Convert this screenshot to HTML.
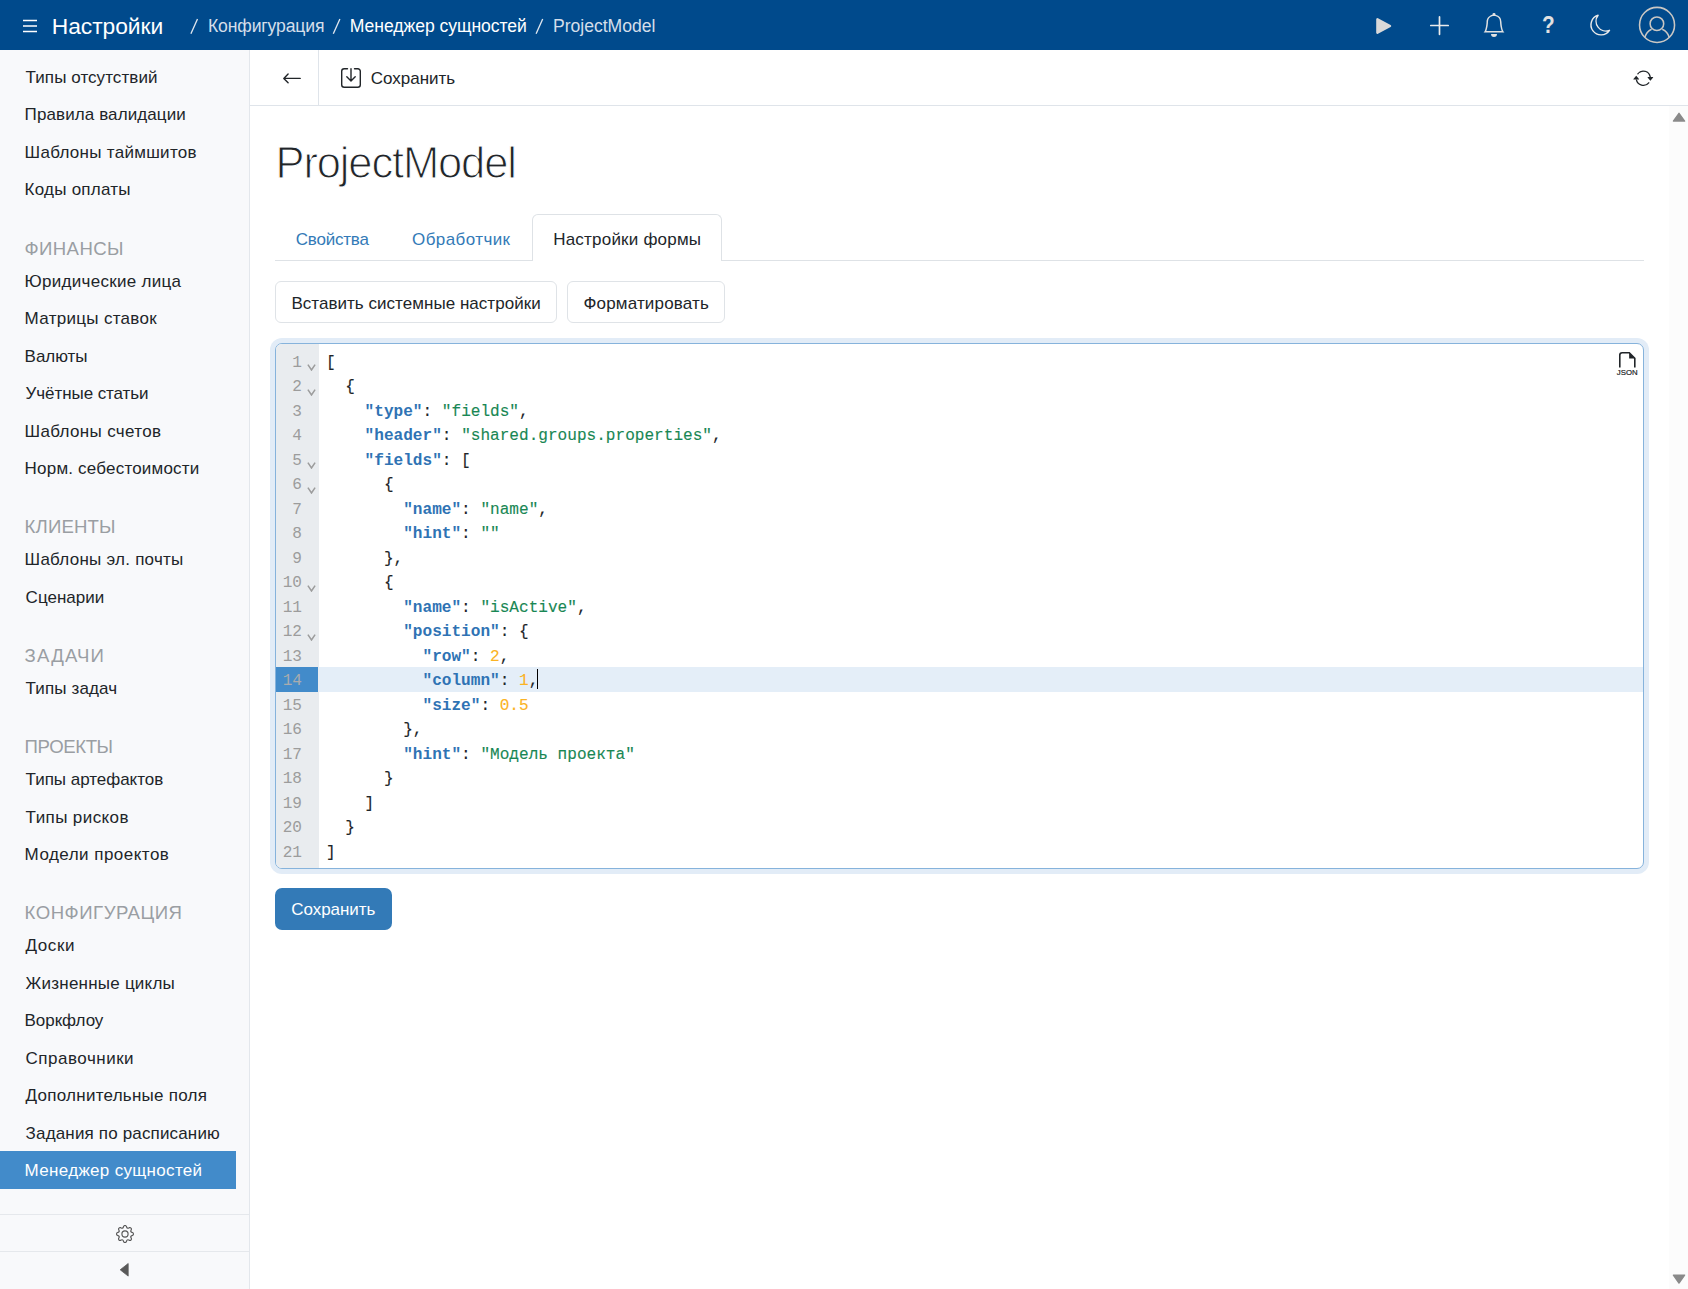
<!DOCTYPE html>
<html lang="ru">
<head>
<meta charset="utf-8">
<title>ProjectModel</title>
<style>
*{box-sizing:border-box;margin:0;padding:0}
html,body{width:1688px;height:1289px;overflow:hidden;background:#fff}
body{font-family:"Liberation Sans",sans-serif;color:#212529;position:relative;font-size:17px}
.abs{position:absolute}
span.t{position:absolute;white-space:nowrap;display:block}

/* ---------- top bar ---------- */
#top{position:absolute;left:0;top:0;width:1688px;height:50px;background:#004a8c;color:#fff}
#top .brand{left:53px;top:11px;font-size:22.8px;line-height:30px;color:#fff}
#top .crumb{top:14px;font-size:17.6px;line-height:24px;color:#fff}
#top .crumb.dim{color:#d4deea}
#top svg{position:absolute}

/* ---------- sidebar ---------- */
#side{position:absolute;left:0;top:50px;width:250px;height:1239px;background:#f8f9fb;border-right:1px solid #e3e7ec}
#side .it{position:absolute;left:25px;font-size:17px;line-height:24px;color:#212529;white-space:nowrap}
#side .gh{position:absolute;left:25px;font-size:18.6px;line-height:24px;color:#9a9ea3;white-space:nowrap}
#side .act{position:absolute;left:0;top:1101px;width:236px;height:38px;background:#428bca}
#side .sep{position:absolute;left:0;width:249px;height:1px;background:#e5e8ec}

/* ---------- toolbar ---------- */
#tool{position:absolute;left:250px;top:50px;width:1438px;height:56px;background:#fff;border-bottom:1px solid #dfe4ea}
#tool .vsep{position:absolute;left:68px;top:0;width:1px;height:55px;background:#dfe4ea}

/* ---------- scrollbar ---------- */
#sb{position:absolute;left:1669px;top:106px;width:19px;height:1183px;background:#fcfcfc}

/* ---------- main ---------- */
#tool .tx{left:121px;top:17px;font-size:17px;line-height:24px;color:#212529}
h1.title{position:absolute;left:275px;top:135px;font-size:43.5px;line-height:56px;font-weight:400;color:#212529;white-space:nowrap;-webkit-text-stroke:1.1px #fff}
#tabs{position:absolute;left:275px;top:260px;width:1369px;height:1px;background:#dee2e6}
#tabact{position:absolute;left:532px;top:214px;width:190px;height:47px;border:1px solid #dee2e6;border-bottom:0;border-radius:6px 6px 0 0;background:#fff}
.tab{top:228px;font-size:17px;line-height:24px;color:#337ab7}
.tab.on{color:#212529}
.btn{position:absolute;top:281px;height:42px;border:1px solid #dfe3e7;border-radius:6px;background:#fff}
.btx{top:292px;font-size:17px;line-height:24px;color:#212529}
#save{position:absolute;left:275px;top:888px;width:117px;height:42px;border-radius:7px;background:#337ab7}
#savetx{left:291px;top:898px;font-size:17px;line-height:24px;color:#fff}

/* ---------- editor ---------- */
#ed{position:absolute;left:275px;top:343px;width:1369px;height:526px;border:1px solid #86b3dc;border-radius:7px;box-shadow:0 0 0 5px #e2ecf7;background:#fff;overflow:hidden}
#gut{position:absolute;left:0;top:0;width:43px;height:524px;background:#e9ecef}
#hl{position:absolute;left:43px;top:323px;width:1325px;height:24.5px;background:#e4eef8}
#hlg{position:absolute;left:0;top:323px;width:42px;height:24.5px;background:#428bca}
#nums{position:absolute;left:0;top:6.5px;width:26px;text-align:right;font-family:"Liberation Mono",monospace;font-size:16.08px;line-height:24.5px;color:#9c9c9c;white-space:pre}
#nums .cur{color:#a9abae}
#code{position:absolute;left:50px;top:6.5px;-webkit-text-stroke:0.12px;font-family:"Liberation Mono",monospace;font-size:16.08px;line-height:24.5px;color:#212529;white-space:pre}
#code b{color:#2f73b4;font-weight:700;-webkit-text-stroke:0}
#code i{color:#198754;font-style:normal}
#code u{color:#fbb324;text-decoration:none}
#cursor{position:absolute;left:261px;top:325px;width:1px;height:20px;background:#000}
.fold{position:absolute;left:31.4px;width:9px;height:7px}
</style>
</head>
<body>

<div id="top">
  <svg style="left:22px;top:17.7px" width="16" height="16" viewBox="0 0 16 16"><path d="M1 2.5h14M1 8h14M1 13.5h14" stroke="#fff" stroke-width="1.7" fill="none"/></svg>

  <svg style="left:1370px;top:10px" width="30" height="32" viewBox="0 0 30 32"><path d="M6.2 9.2v13.6a1.2 1.2 0 0 0 1.8 1.05l12.6-6.8a1.2 1.2 0 0 0 0-2.1L8 8.15a1.2 1.2 0 0 0-1.8 1.05z" fill="#d9d9d9"/></svg>
  <svg style="left:1426px;top:12px" width="28" height="28" viewBox="0 0 28 28"><path d="M13.5 4.9v17.4M4.8 13.5h17.4" stroke="#ebebeb" stroke-width="1.7" stroke-linecap="round" fill="none"/></svg>
  <svg style="left:1481.8px;top:13.1px" width="24" height="24" viewBox="0 0 16 16"><path fill="#e1e1e1" d="M8 16a2 2 0 0 0 2-2H6a2 2 0 0 0 2 2zM8 1.918l-.797.161A4.002 4.002 0 0 0 4 6c0 .628-.134 2.197-.459 3.742-.16.767-.376 1.566-.663 2.258h10.244c-.287-.692-.502-1.49-.663-2.258C12.134 8.197 12 6.628 12 6a4.002 4.002 0 0 0-3.203-3.92L8 1.917zM14.22 12c.223.447.481.801.78 1H1c.299-.199.557-.553.78-1C2.68 10.2 3 6.88 3 6c0-2.42 1.72-4.44 4.005-4.901a1 1 0 1 1 1.99 0A5.002 5.002 0 0 1 13 6c0 .88.32 4.2 1.22 6z"/></svg>
  <span class="t" style="left:1541.6px;top:11px;font-size:23px;line-height:28px;font-weight:700;color:#e1e1e1;transform:scaleX(.9);transform-origin:0 0">?</span>
  <svg style="left:1586px;top:10px" width="28" height="30" viewBox="0 0 28 30"><path d="M12.1 5.2A10.07 10.07 0 1 0 23.5 20.3A9.82 9.82 0 0 1 12.1 5.2z" stroke="#ebebeb" stroke-width="1.4" stroke-linejoin="round" fill="none"/></svg>
  <svg style="left:1637px;top:5px" width="40" height="40" viewBox="0 0 40 40"><circle cx="20.05" cy="19.9" r="17.5" stroke="#c9c7c4" stroke-width="1.55" fill="none"/><circle cx="19.9" cy="18.7" r="6.8" stroke="#c9c7c4" stroke-width="1.55" fill="none"/><path d="M7.85 32.4A12.6 12.6 0 0 1 14.6 24.3M25.3 24.3A12.6 12.6 0 0 1 32.2 32.4" stroke="#c9c7c4" stroke-width="1.55" fill="none"/></svg>

  <svg style="left:0;top:0" width="700" height="50" viewBox="0 0 700 50"><path d="M190.9 33.7L197.5 18.9M333.3 33.7L339.9 18.9M536.1 33.7L542.7 18.9" stroke="#dde5ee" stroke-width="1.35" fill="none"/></svg>
  <span class="t brand" style="left:51.80px;letter-spacing:-0.056px">Настройки</span>
  <span class="t crumb dim" style="left:208.00px;letter-spacing:-0.148px">Конфигурация</span>
  <span class="t crumb" style="left:349.80px;letter-spacing:-0.059px">Менеджер сущностей</span>
  <span class="t crumb dim" style="left:553.00px;letter-spacing:-0.034px">ProjectModel</span>
</div>

<div id="side">
  <span class="it" style="top:16px;left:25.60px;letter-spacing:0.071px">Типы отсутствий</span>
  <span class="it" style="top:53px;left:24.60px;letter-spacing:0.100px">Правила валидации</span>
  <span class="it" style="top:91px;left:24.60px;letter-spacing:0.288px">Шаблоны таймшитов</span>
  <span class="it" style="top:128px;left:24.60px;letter-spacing:0.240px">Коды оплаты</span>

  <span class="gh" style="top:187px;left:24.60px;letter-spacing:0.365px">ФИНАНСЫ</span>
  <span class="it" style="top:220px;left:24.60px;letter-spacing:0.293px">Юридические лица</span>
  <span class="it" style="top:257px;left:24.60px;letter-spacing:0.307px">Матрицы ставок</span>
  <span class="it" style="top:295px;left:24.60px;letter-spacing:-0.040px">Валюты</span>
  <span class="it" style="top:332px;left:25.60px;letter-spacing:-0.076px">Учётные статьи</span>
  <span class="it" style="top:370px;left:24.60px;letter-spacing:0.339px">Шаблоны счетов</span>
  <span class="it" style="top:407px;left:24.60px;letter-spacing:0.201px">Норм. себестоимости</span>

  <span class="gh" style="top:465px;left:24.60px;letter-spacing:0.134px">КЛИЕНТЫ</span>
  <span class="it" style="top:498px;left:24.60px;letter-spacing:0.247px">Шаблоны эл. почты</span>
  <span class="it" style="top:536px;left:25.60px;letter-spacing:0.025px">Сценарии</span>

  <span class="gh" style="top:594px;left:24.60px;letter-spacing:1.160px">ЗАДАЧИ</span>
  <span class="it" style="top:627px;left:25.60px;letter-spacing:0.132px">Типы задач</span>

  <span class="gh" style="top:685px;left:24.60px;letter-spacing:-0.401px">ПРОЕКТЫ</span>
  <span class="it" style="top:718px;left:25.60px;letter-spacing:-0.028px">Типы артефактов</span>
  <span class="it" style="top:756px;left:25.60px;letter-spacing:0.400px">Типы рисков</span>
  <span class="it" style="top:793px;left:24.60px;letter-spacing:0.471px">Модели проектов</span>

  <span class="gh" style="top:851px;left:24.60px;letter-spacing:0.494px">КОНФИГУРАЦИЯ</span>
  <span class="it" style="top:884px;left:25.60px;letter-spacing:0.550px">Доски</span>
  <span class="it" style="top:922px;left:25.60px;letter-spacing:0.229px">Жизненные циклы</span>
  <span class="it" style="top:959px;left:24.60px;letter-spacing:-0.060px">Воркфлоу</span>
  <span class="it" style="top:997px;left:25.60px;letter-spacing:0.500px">Справочники</span>
  <span class="it" style="top:1034px;left:25.60px;letter-spacing:0.257px">Дополнительные поля</span>
  <span class="it" style="top:1072px;left:25.60px;letter-spacing:0.160px">Задания по расписанию</span>
  <div class="act"></div>
  <span class="it" style="top:1109px;color:#fff;left:24.60px;letter-spacing:0.320px">Менеджер сущностей</span>


  <svg class="abs" style="left:115.6px;top:1174.8px" width="18" height="18" viewBox="0 0 16 16"><path fill="#555" d="M8 4.754a3.246 3.246 0 1 0 0 6.492 3.246 3.246 0 0 0 0-6.492zM5.754 8a2.246 2.246 0 1 1 4.492 0 2.246 2.246 0 0 1-4.492 0z"/><path fill="#555" d="M9.796 1.343c-.527-1.79-3.065-1.79-3.592 0l-.094.319a.873.873 0 0 1-1.255.52l-.292-.16c-1.64-.892-3.433.902-2.54 2.541l.159.292a.873.873 0 0 1-.52 1.255l-.319.094c-1.79.527-1.79 3.065 0 3.592l.319.094a.873.873 0 0 1 .52 1.255l-.16.292c-.892 1.64.901 3.434 2.541 2.54l.292-.159a.873.873 0 0 1 1.255.52l.094.319c.527 1.79 3.065 1.79 3.592 0l.094-.319a.873.873 0 0 1 1.255-.52l.292.16c1.64.893 3.434-.902 2.54-2.541l-.159-.292a.873.873 0 0 1 .52-1.255l.319-.094c1.79-.527 1.79-3.065 0-3.592l-.319-.094a.873.873 0 0 1-.52-1.255l.16-.292c.893-1.64-.902-3.433-2.541-2.54l-.292.159a.873.873 0 0 1-1.255-.52l-.094-.319zm-2.633.283c.246-.835 1.428-.835 1.674 0l.094.319a1.873 1.873 0 0 0 2.693 1.115l.291-.16c.764-.415 1.6.42 1.184 1.185l-.159.292a1.873 1.873 0 0 0 1.116 2.692l.318.094c.835.246.835 1.428 0 1.674l-.319.094a1.873 1.873 0 0 0-1.115 2.693l.16.291c.415.764-.42 1.6-1.185 1.184l-.291-.159a1.873 1.873 0 0 0-2.693 1.116l-.094.318c-.246.835-1.428.835-1.674 0l-.094-.319a1.873 1.873 0 0 0-2.692-1.115l-.292.16c-.764.415-1.6-.42-1.184-1.185l.159-.291A1.873 1.873 0 0 0 1.945 8.93l-.319-.094c-.835-.246-.835-1.428 0-1.674l.319-.094A1.873 1.873 0 0 0 3.06 4.377l-.16-.292c-.415-.764.42-1.6 1.185-1.184l.292.159a1.873 1.873 0 0 0 2.692-1.115l.094-.319z"/></svg>
  <svg class="abs" style="left:118px;top:1211px" width="14" height="18" viewBox="0 0 14 18"><path d="M10.2 2.5v12.6L2.2 8.8z" fill="#595959" stroke="#595959" stroke-width="0.8" stroke-linejoin="round"/></svg>
  <div class="sep" style="top:1164px"></div>
  <div class="sep" style="top:1201px"></div>
</div>

<div id="tool">
  <div class="vsep"></div>
  <svg class="abs" style="left:32px;top:19px" width="20" height="18" viewBox="0 0 20 18"><path d="M1.8 9.4h16.4M1.8 9.4l4.3-4.3M1.8 9.4l4.3 4.3" stroke="#212529" stroke-width="1.4" fill="none" stroke-linecap="round" stroke-linejoin="round"/></svg>
  <svg class="abs" style="left:90px;top:17px" width="22" height="22" viewBox="0 0 22 22"><path d="M7.5 1.7H4.2a2.5 2.5 0 0 0-2.5 2.5v13.6a2.5 2.5 0 0 0 2.5 2.5h13.6a2.5 2.5 0 0 0 2.5-2.5V4.2a2.5 2.5 0 0 0-2.5-2.5h-3.3" stroke="#212529" stroke-width="1.4" fill="none" stroke-linecap="round"/><path d="M11 1.7v12M11 13.9l-4.2-4.2M11 13.9l4.2-4.2" stroke="#212529" stroke-width="1.4" fill="none" stroke-linecap="round"/></svg>
  <span class="t tx" style="left:120.80px;letter-spacing:-0.019px">Сохранить</span>
  <svg class="abs" style="left:1383px;top:17.5px" width="20.6" height="20.6" viewBox="0 0 16 16"><path fill="#212529" d="M11.534 7h3.932a.25.25 0 0 1 .192.41l-1.966 2.36a.25.25 0 0 1-.384 0l-1.966-2.36a.25.25 0 0 1 .192-.41zm-11 2h3.932a.25.25 0 0 0 .192-.41L2.692 6.23a.25.25 0 0 0-.384 0L.342 8.59A.25.25 0 0 0 .534 9z"/><path fill="#212529" fill-rule="evenodd" d="M8 3c-1.552 0-2.94.707-3.857 1.818a.5.5 0 1 1-.771-.636A6.002 6.002 0 0 1 13.917 7H12.9A5.002 5.002 0 0 0 8 3zM3.1 9a5.002 5.002 0 0 0 8.757 2.182.5.5 0 1 1 .771.636A6.002 6.002 0 0 1 2.083 9H3.1z"/></svg>
</div>

<div id="main">
  <h1 class="title" style="left:275.60px;letter-spacing:-1.147px">ProjectModel</h1>
  <div id="tabs"></div>
  <div id="tabact"></div>
  <span class="t tab" style="left:295.80px;letter-spacing:-0.224px">Свойства</span>
  <span class="t tab" style="left:412.00px;letter-spacing:0.419px">Обработчик</span>
  <span class="t tab on" style="left:553.20px;letter-spacing:0.212px">Настройки формы</span>
  <div class="btn" style="left:275px;width:282px"></div>
  <div class="btn" style="left:567px;width:158px"></div>
  <span class="t btx" style="left:291.40px;letter-spacing:0.038px">Вставить системные настройки</span>
  <span class="t btx" style="left:583.40px;letter-spacing:0.182px">Форматировать</span>
  <div id="ed">
    <div id="gut"></div>
    <div id="hl"></div>
    <div id="hlg"></div>
    <div id="nums">1
2
3
4
5
6
7
8
9
10
11
12
13
<span class="cur">14</span>
15
16
17
18
19
20
21</div>
    <svg class="fold" style="top:20.2px" viewBox="0 0 9 7"><path d="M0.9 0.6L4.5 6L8.1 0.6" stroke="#9c9c9c" stroke-width="1.5" fill="none"/></svg><svg class="fold" style="top:44.7px" viewBox="0 0 9 7"><path d="M0.9 0.6L4.5 6L8.1 0.6" stroke="#9c9c9c" stroke-width="1.5" fill="none"/></svg><svg class="fold" style="top:118.2px" viewBox="0 0 9 7"><path d="M0.9 0.6L4.5 6L8.1 0.6" stroke="#9c9c9c" stroke-width="1.5" fill="none"/></svg><svg class="fold" style="top:142.7px" viewBox="0 0 9 7"><path d="M0.9 0.6L4.5 6L8.1 0.6" stroke="#9c9c9c" stroke-width="1.5" fill="none"/></svg><svg class="fold" style="top:240.7px" viewBox="0 0 9 7"><path d="M0.9 0.6L4.5 6L8.1 0.6" stroke="#9c9c9c" stroke-width="1.5" fill="none"/></svg><svg class="fold" style="top:289.7px" viewBox="0 0 9 7"><path d="M0.9 0.6L4.5 6L8.1 0.6" stroke="#9c9c9c" stroke-width="1.5" fill="none"/></svg>
    <div id="code">[
  {
    <b>"type"</b>: <i>"fields"</i>,
    <b>"header"</b>: <i>"shared.groups.properties"</i>,
    <b>"fields"</b>: [
      {
        <b>"name"</b>: <i>"name"</i>,
        <b>"hint"</b>: <i>""</i>
      },
      {
        <b>"name"</b>: <i>"isActive"</i>,
        <b>"position"</b>: {
          <b>"row"</b>: <u>2</u>,
          <b>"column"</b>: <u>1</u>,
          <b>"size"</b>: <u>0.5</u>
        },
        <b>"hint"</b>: <i>"Модель проекта"</i>
      }
    ]
  }
]</div>
    <div id="cursor"></div>
    <svg class="abs" style="left:1340px;top:7px" width="24" height="28" viewBox="0 0 24 28"><path d="M3.8 16.6V4.1a2.3 2.3 0 0 1 2.3-2.3h7.2l5.5 5.5v9.3" stroke="#212529" stroke-width="1.6" fill="none"/><path d="M13.1 1.6l5.9 5.9h-5.9z" fill="#212529"/><text x="11.2" y="24" font-family="Liberation Sans" font-size="7.8" text-anchor="middle" fill="#212529" stroke="#212529" stroke-width="0.2">JSON</text></svg>
  </div>
  <div id="save"></div>
  <span class="t" id="savetx" style="left:291.20px;letter-spacing:-0.031px">Сохранить</span>
</div>

<div id="sb">
  <svg class="abs" style="left:1.5px;top:6px" width="16" height="12" viewBox="0 0 16 12"><path d="M2.4 9.1L8 1.3l5.6 7.8z" fill="#8a8a8a" stroke="#8a8a8a" stroke-width="1.4" stroke-linejoin="round"/></svg>
  <svg class="abs" style="left:1.5px;top:1167px" width="16" height="12" viewBox="0 0 16 12"><path d="M2.4 2.1L8 10l5.6-7.9z" fill="#8a8a8a" stroke="#8a8a8a" stroke-width="1.4" stroke-linejoin="round"/></svg>
</div>

</body>
</html>
